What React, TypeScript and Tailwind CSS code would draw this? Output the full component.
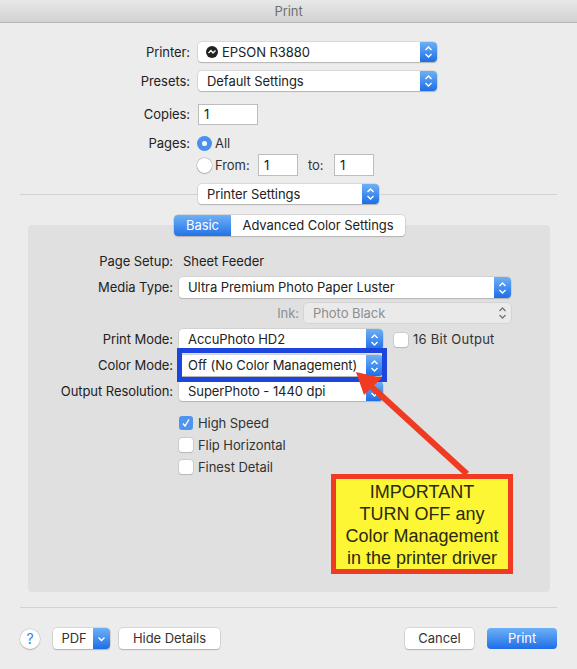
import type { ReactNode } from 'react'

const uiFont = "font-['Inter','Liberation_Sans',sans-serif]"

const Stepper = ({ disabled = false }: { disabled?: boolean }) => (
  <span
    className={
      disabled
        ? 'flex h-full w-[17px] shrink-0 items-center justify-center'
        : 'flex h-full w-[17px] shrink-0 items-center justify-center rounded-r-[4px] bg-gradient-to-b from-[#6cb0f7] to-[#1d6de6]'
    }
  >
    <svg width="9" height="14" viewBox="0 0 9 14" fill="none" stroke={disabled ? '#777777' : '#ffffff'} strokeWidth="1.4">
      <path d="M1.5 5 L4.5 2 L7.5 5" />
      <path d="M1.5 9 L4.5 12 L7.5 9" />
    </svg>
  </span>
)

const Select = ({ value, width, height = 'h-5', icon, disabled = false }: { value: string; width: string; height?: string; icon?: ReactNode; disabled?: boolean }) => (
  <div
    className={`flex ${width} ${height} shrink-0 items-center rounded-[4px] ${
      disabled ? 'bg-[#eaeaea] text-[#8e8e8e] shadow-[0_0_0_1px_#d4d4d4]' : 'bg-white text-[#222222] shadow-[0_0_0_0.5px_#c4c4c4,0_1px_1px_#a8a8a8]'
    }`}
  >
    <span className="flex min-w-0 flex-1 items-center gap-[4px] whitespace-nowrap pl-[9px]">
      {icon}
      {value}
    </span>
    <Stepper disabled={disabled} />
  </div>
)

const Label = ({ children, width }: { children: ReactNode; width: string }) => (
  <span className={`${width} shrink-0 whitespace-nowrap text-right text-[#222222]`}>{children}</span>
)

const TextBox = ({ value, width, height = 'h-[21px]' }: { value: string; width: string; height?: string }) => (
  <div className={`flex ${width} ${height} items-center border border-[#bdbdbd] bg-white pl-[5px] text-[#222222]`}>{value}</div>
)

const Check = ({ label, checked = false, wide = false }: { label: string; checked?: boolean; wide?: boolean }) => (
  <div className="flex h-[14px] items-center gap-[5px] text-[#333333]">
    {checked ? (
      <span className="flex h-[14px] w-[14px] items-center justify-center rounded-[3px] bg-[#4f94ee]">
        <svg width="10" height="10" viewBox="0 0 10 10" fill="none" stroke="#ffffff" strokeWidth="1.4">
          <path d="M2 5.5 L4 8 L8 1.5" />
        </svg>
      </span>
    ) : (
      <span className="h-[14px] w-[14px] rounded-[3px] bg-white shadow-[0_0_0_0.5px_#b8b8b8,0_1px_1px_#bbbbbb]" />
    )}
    <span className={wide ? 'whitespace-nowrap tracking-[0.25px]' : 'whitespace-nowrap'}>{label}</span>
  </div>
)

const Button = ({ children, width }: { children: ReactNode; width: string }) => (
  <div className={`flex h-[21px] ${width} items-center justify-center rounded-[4px] bg-white text-[#333333] shadow-[0_0_0_0.5px_#c0c0c0,0_1px_1px_#a8a8a8]`}>
    {children}
  </div>
)

const App = () => {
  return (
    <div className={`relative h-[669px] w-[577px] overflow-hidden bg-[#ececec] text-[13px] leading-none tracking-[-0.06px] ${uiFont}`}>
      <div className="flex h-[23px] items-center justify-center border-b border-[#b4b4b4] bg-gradient-to-b from-[#e8e8e8] to-[#d2d2d2] text-[#6f6f6f]">
        Print
      </div>

      <div className="mt-[19px] flex items-center gap-2">
        <Label width="w-[190px]">Printer:</Label>
        <Select
          value="EPSON R3880"
          width="w-[239px]"
          icon={
            <svg width="12" height="12" viewBox="0 0 12 12" className="-ml-[1px]">
              <circle cx="6" cy="6" r="6" fill="#222222" />
              <path d="M2.5 7 L5 4.5 L7 7 L9.5 4.5" fill="none" stroke="#ffffff" strokeWidth="1.3" />
            </svg>
          }
        />
      </div>
      <div className="mt-[9px] flex items-center gap-2">
        <Label width="w-[190px]">Presets:</Label>
        <Select value="Default Settings" width="w-[239px]" />
      </div>
      <div className="mt-[13px] flex items-center gap-2">
        <Label width="w-[190px]">Copies:</Label>
        <TextBox value="1" width="w-[60px]" />
      </div>

      <div className="mt-[9px] flex h-[18px] items-center gap-[7px]">
        <Label width="w-[190px]">Pages:</Label>
        <div className="flex items-center gap-[3px]">
          <span className="flex h-[15px] w-[15px] items-center justify-center rounded-full bg-[#4a90ec]">
            <span className="h-[5px] w-[5px] rounded-full bg-white" />
          </span>
          <span className="text-[#333333]">All</span>
        </div>
      </div>
      <div className="ml-[197px] mt-[2px] flex items-center">
        <span className="h-[15px] w-[15px] rounded-full bg-white shadow-[0_0_0_0.5px_#a8a8a8,0_1px_1px_#bbbbbb]" />
        <span className="ml-[3px] w-[43px] text-[#333333]">From:</span>
        <TextBox value="1" width="w-[40px]" height="h-[22px]" />
        <span className="ml-[10px] w-[26px] text-[#333333]">to:</span>
        <TextBox value="1" width="w-[40px]" height="h-[22px]" />
      </div>

      <div className="mt-[8px] flex items-center px-5">
        <div className="h-px flex-1 bg-[#d2d2d2]" />
        <Select value="Printer Settings" width="w-[181px]" />
        <div className="h-px flex-1 bg-[#d2d2d2]" />
      </div>

      <div className="relative z-10 ml-[174px] mt-[11px] flex">
        <div className="flex h-[21px] w-[231px] rounded-[4px] bg-white shadow-[0_0_0_0.5px_#c0c0c0,0_1px_1px_#a8a8a8]">
          <span className="flex w-[57px] items-center justify-center rounded-l-[4px] bg-gradient-to-b from-[#6cb0f7] to-[#2272e8] text-white">Basic</span>
          <span className="flex flex-1 items-center justify-center whitespace-nowrap text-[#222222]">Advanced Color Settings</span>
        </div>
      </div>

      <div className="ml-[28px] -mt-[11px] h-[367px] w-[522px] rounded-[4px] bg-[#e0e0e0] pt-[27px]">
        <div className="flex h-[18px] items-center gap-[10px]">
          <Label width="w-[145px]">Page Setup:</Label>
          <span className="text-[#222222]">Sheet Feeder</span>
        </div>
        <div className="mt-[7px] flex items-center gap-[6px]">
          <Label width="w-[145px]">Media Type:</Label>
          <Select value="Ultra Premium Photo Paper Luster" width="w-[332px]" height="h-[21px]" />
        </div>
        <div className="mt-[5px] flex items-center justify-end gap-[5px] pr-[39px]">
          <span className="text-[#8e8e8e]">Ink:</span>
          <Select value="Photo Black" width="w-[207px]" disabled />
        </div>
        <div className="mt-[6px] flex items-center gap-[6px]">
          <Label width="w-[145px]">Print Mode:</Label>
          <Select value="AccuPhoto HD2" width="w-[204px]" height="h-[21px]" />
          <div className="ml-[5px]">
            <Check label="16 Bit Output" wide />
          </div>
        </div>
        <div className="mt-[5px] flex items-center gap-[6px]">
          <Label width="w-[145px]">Color Mode:</Label>
          <Select value="Off (No Color Management)" width="w-[204px]" height="h-[21px]" />
        </div>
        <div className="mt-[5px] flex items-center gap-[6px]">
          <Label width="w-[145px]">Output Resolution:</Label>
          <Select value="SuperPhoto - 1440 dpi" width="w-[204px]" height="h-[20px]" />
        </div>
        <div className="ml-[151px] mt-[15px] flex flex-col gap-2">
          <Check label="High Speed" checked />
          <Check label="Flip Horizontal" />
          <Check label="Finest Detail" />
        </div>
      </div>

      <div className="mx-5 mt-[15px] h-px bg-[#d2d2d2]" />

      <div className="mt-[20px] flex items-center px-5">
        <span className="flex h-5 w-5 items-center justify-center rounded-full bg-white text-[14px] text-[#2f7de8] shadow-[0_0_0_0.5px_#c0c0c0,0_1px_1px_#a8a8a8]">?</span>
        <div className="ml-[13px] flex h-[21px] w-[57px] rounded-[4px] bg-white text-[#333333] shadow-[0_0_0_0.5px_#c0c0c0,0_1px_1px_#a8a8a8]">
          <span className="flex flex-1 items-center justify-center pl-[2px]">PDF</span>
          <span className="flex w-[17px] items-center justify-center rounded-r-[4px] bg-gradient-to-b from-[#6cb0f7] to-[#1d6de6]">
            <svg width="9" height="8" viewBox="0 0 9 8" fill="none" stroke="#ffffff" strokeWidth="1.4">
              <path d="M1.5 2.5 L4.5 5.5 L7.5 2.5" />
            </svg>
          </span>
        </div>
        <div className="ml-[9px]">
          <Button width="w-[101px]">Hide Details</Button>
        </div>
        <div className="ml-auto">
          <Button width="w-[69px]">Cancel</Button>
        </div>
        <div className="ml-[13px] flex h-[21px] w-[70px] items-center justify-center rounded-[4px] bg-gradient-to-b from-[#6cb0f7] to-[#1d6de6] text-white">Print</div>
      </div>

      {/* annotation on top of the dialog */}
      <div className="absolute left-[177px] top-[348px] h-[34px] w-[210px] border-[5px] border-[#1b45dd]" />
      <svg className="absolute left-[340px] top-[360px]" width="140" height="120" viewBox="0 0 140 120">
        <path d="M127 114 L32 27" stroke="#f03b22" strokeWidth="6" fill="none" />
        <path d="M16 12 L42 18 L24 35 Z" fill="#f03b22" />
      </svg>
      <div className="absolute left-[331px] top-[474px] flex h-[100px] w-[182px] flex-col items-center justify-center border-[5px] border-[#f03b22] bg-[#fdf635] pt-[2px] font-['Liberation_Sans',sans-serif] text-[18px] leading-[22px] tracking-normal text-[#2a2a10]">
        <span>IMPORTANT</span>
        <span>TURN OFF any</span>
        <span>Color Management</span>
        <span>in the printer driver</span>
      </div>
    </div>
  )
}

export default App
